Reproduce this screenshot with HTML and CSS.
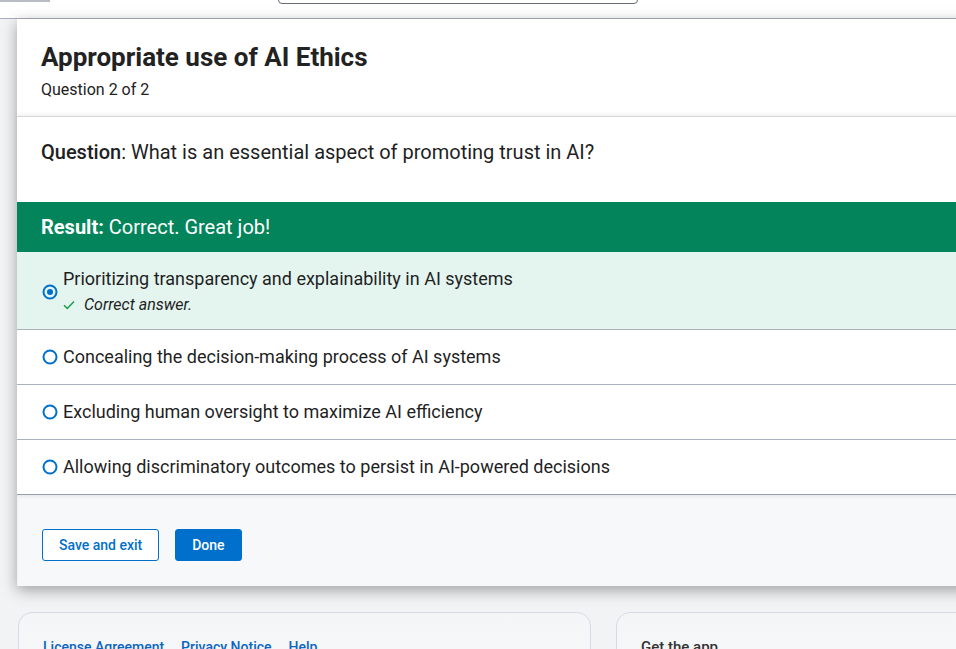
FILE: index.html
```html
<!DOCTYPE html>
<html lang="en">
<head>
  <meta charset="UTF-8" />
  <meta name="viewport" content="width=device-width, initial-scale=1" />
  <title>Appropriate use of AI Ethics — Quiz</title>
  <link rel="stylesheet" href="styles.css">
</head>
<body>

<header class="topbar">
  <div class="brand"><span class="brand-tag"></span></div>
  <div class="search"></div>
</header>

<main class="page">
  <section class="quiz-card">
    <div class="quiz-head">
      <h1>Appropriate use of AI Ethics</h1>
      <p class="progress">Question 2 of 2</p>
    </div>

    <div class="question">
      <p><strong>Question</strong>: What is an essential aspect of promoting trust in AI?</p>
    </div>

    <div class="result">
      <span><strong>Result:</strong> Correct. Great job!</span>
    </div>

    <ul class="options">
      <li class="option option-correct">
        <svg class="radio" width="18" height="18" viewBox="0 0 18 18">
          <circle cx="9" cy="9" r="6.5" fill="none" stroke="#0070cc" stroke-width="2"/>
          <circle cx="9" cy="9" r="3" fill="#0070cc"/>
        </svg>
        <div class="option-text">
          <div>Prioritizing transparency and explainability in AI systems</div>
          <div class="feedback">
            <svg width="12" height="10" viewBox="0 0 12 10">
              <path d="M1 5.2 L4.3 8.4 L11 1.4" fill="none" stroke="#1e9e4a" stroke-width="1.5"/>
            </svg>
            <em>Correct answer.</em>
          </div>
        </div>
      </li>
      <li class="option">
        <svg class="radio" width="18" height="18" viewBox="0 0 18 18">
          <circle cx="9" cy="9" r="6.5" fill="none" stroke="#0070cc" stroke-width="2"/>
        </svg>
        <div class="option-text">Concealing the decision-making process of AI systems</div>
      </li>
      <li class="option">
        <svg class="radio" width="18" height="18" viewBox="0 0 18 18">
          <circle cx="9" cy="9" r="6.5" fill="none" stroke="#0070cc" stroke-width="2"/>
        </svg>
        <div class="option-text">Excluding human oversight to maximize AI efficiency</div>
      </li>
      <li class="option">
        <svg class="radio" width="18" height="18" viewBox="0 0 18 18">
          <circle cx="9" cy="9" r="6.5" fill="none" stroke="#0070cc" stroke-width="2"/>
        </svg>
        <div class="option-text">Allowing discriminatory outcomes to persist in AI-powered decisions</div>
      </li>
    </ul>

    <div class="actions">
      <a href="#" class="btn btn-outline">Save and exit</a>
      <a href="#" class="btn btn-primary">Done</a>
    </div>
  </section>

  <div class="footer-cards">
    <div class="footer-card footer-links">
      <a href="#">License Agreement</a>
      <a href="#">Privacy Notice</a>
      <a href="#">Help</a>
    </div>
    <div class="footer-card footer-app">
      <h4>Get the app</h4>
    </div>
  </div>
</main>

</body>
</html>
```

FILE: styles.css
```css
html, body {
  margin: 0;
  overflow: hidden;
}

body {
  font-family: Roboto, 'Liberation Sans', sans-serif;
  background: #f2f3f5;
  color: #1f1f1f;
  width: 956px;
}

.topbar {
  background: #fff;
  height: 18px;
  border-bottom: 1px solid #a9aebb;
  display: flex;
  align-items: flex-start;
  overflow: hidden;
}

.brand {
  width: 278px;
}

.brand-tag {
  display: block;
  width: 50px;
  height: 2px;
  background: #b9bcc4;
}

.search {
  width: 360px;
  height: 30px;
  margin-top: -26px;
  border: 1px solid #666b75;
  border-radius: 4px;
  box-sizing: border-box;
}

.page {
  padding-left: 17px;
}

.quiz-card {
  width: 1000px;
  background: #fff;
  box-shadow: 0 4px 14px rgba(0,0,0,0.35);
}

.quiz-head {
  padding: 24px 24px 16px;
}

.quiz-head h1 {
  margin: 0;
  font-size: 26px;
  line-height: 28px;
  font-weight: 700;
  color: #222;
}

.progress {
  margin: 9px 0 0;
  font-size: 16px;
  line-height: 20px;
  color: #222;
}

.question {
  border-top: 1px solid #d6d6d6;
  box-shadow: 0 -2px 4px rgba(0,0,0,0.06);
  padding: 23px 24px 38px;
}

.question p {
  margin: 0;
  font-size: 20px;
  line-height: 24px;
}

.question strong {
  font-weight: 500;
}

.result {
  background: #03845a;
  color: #fff;
  height: 50px;
  padding: 0 24px;
  display: flex;
  align-items: center;
  font-size: 20px;
}

.result strong {
  font-weight: 700;
}

.options {
  list-style: none;
  margin: 0;
  padding: 0;
}

.option {
  display: flex;
  align-items: center;
  gap: 4px;
  padding: 15px 24px;
  border-bottom: 1px solid #aab2bf;
  font-size: 18px;
  line-height: 24px;
}

.option:last-child {
  border-bottom-color: #98a0ad;
}

.option-correct {
  background: #e4f5ef;
  padding: 15px 24px 12px;
}

.feedback {
  display: flex;
  align-items: center;
  gap: 9px;
  margin-top: 2px;
  font-size: 16px;
}

.radio {
  flex-shrink: 0;
}

.actions {
  background: #f7f8fa;
  box-shadow: inset 0 2px 3px rgba(0,0,0,0.06);
  padding: 34px 25px 25px;
  display: flex;
  gap: 16px;
}

.btn {
  box-sizing: border-box;
  height: 32px;
  display: inline-flex;
  align-items: center;
  padding: 0 16px;
  border-radius: 3px;
  font-size: 14px;
  font-weight: 500;
  text-decoration: none;
}

.btn-outline {
  border: 1px solid #0070cc;
  color: #0070cc;
  background: #fff;
}

.btn-primary {
  background: #0070cc;
  color: #fff;
  border: 1px solid #0070cc;
}

.footer-cards {
  display: flex;
  gap: 25px;
  margin-top: 26px;
  padding-left: 1px;
}

.footer-card {
  flex-shrink: 0;
  background: linear-gradient(#f4f5f7, #f8f9fb);
  border: 1px solid #d5dbe4;
  border-radius: 14px;
  height: 80px;
  box-sizing: border-box;
  padding: 24px 24px 0;
}

.footer-links {
  width: 573px;
  display: flex;
  gap: 17px;
}

.footer-links a {
  color: #0a66c2;
  font-weight: 500;
  font-size: 14px;
  line-height: 20px;
  text-decoration: none;
}

.footer-app {
  width: 400px;
}

.footer-app h4 {
  margin: 0;
  font-size: 15px;
  line-height: 20px;
  font-weight: 500;
  color: #333;
}
```
